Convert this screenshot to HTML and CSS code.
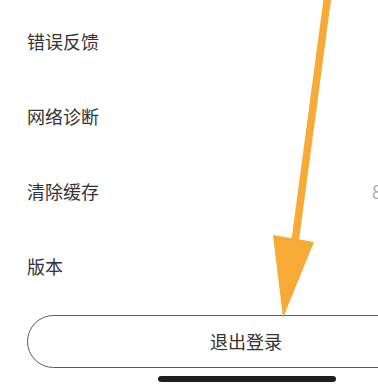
FILE: index.html
```html
<!DOCTYPE html>
<html lang="zh-CN">
<head>
<meta charset="utf-8">
<title>设置</title>
<link rel="stylesheet" href="styles.css">
</head>
<body>
<div class="screen">
  <ul class="menu">
    <li class="row"><span class="label">错误反馈</span></li>
    <li class="row"><span class="label">网络诊断</span></li>
    <li class="row"><span class="label">清除缓存</span><span class="value">8.6M</span></li>
    <li class="row"><span class="label">版本</span></li>
  </ul>
  <button class="logout">退出登录</button>
  <div class="home-bar"></div>
  <svg class="arrow" width="378" height="389" viewBox="0 0 378 389" xmlns="http://www.w3.org/2000/svg">
    <line x1="328" y1="-6" x2="295" y2="242" stroke="#f7aa35" stroke-width="7.5" stroke-linecap="round"/>
    <polygon points="273,235 314,242 283,318" fill="#f7aa35"/>
  </svg>
</div>
</body>
</html>
```
FILE: styles.css
```css
html, body {
  margin: 0;
  padding: 0;
  width: 378px;
  height: 389px;
  overflow: hidden;
  background: #ffffff;
}
.screen {
  position: relative;
  width: 492px;
  height: 389px;
  padding: 3px 27px 0;
  box-sizing: border-box;
  font-family: "Noto Sans CJK SC", "Noto Sans", sans-serif;
  color: #333333;
}
.menu {
  list-style: none;
  margin: 0;
  padding: 0;
}
.row {
  display: grid;
  grid-template-columns: 345px auto;
  height: 75px;
  align-items: center;
  font-size: 18px;
}
.label {
  line-height: 24px;
}
.value {
  color: #a8a8a8;
  font-size: 18px;
  line-height: 24px;
}
.logout {
  display: block;
  margin-top: 12px;
  width: 438px;
  height: 53px;
  border: 1px solid #5a5a5a;
  border-radius: 27px;
  background: #ffffff;
  font-family: "Noto Sans CJK SC", "Noto Sans", sans-serif;
  font-size: 18px;
  color: #333333;
  padding: 0 0 2px;
}
.home-bar {
  margin: 8px 0 0 131px;
  width: 178px;
  height: 6px;
  border-radius: 3px;
  background: #1f1f1f;
}
.arrow {
  position: absolute;
  left: 0;
  top: 0;
  pointer-events: none;
}
```
